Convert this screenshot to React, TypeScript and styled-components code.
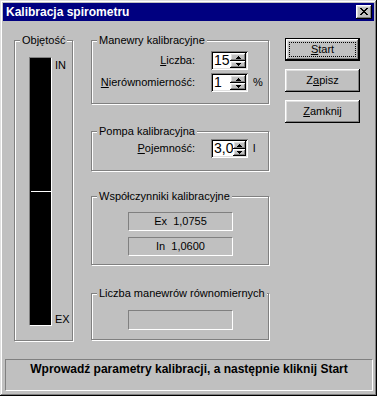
import React from "react";
import styled, { createGlobalStyle } from "styled-components";

const Global = createGlobalStyle`
  html, body { margin: 0; padding: 0; background: #c0c0c0; }
  body {
    font-family: "Liberation Sans", Arial, sans-serif;
    font-size: 11px;
    color: #000;
  }
`;

const raised =
  "box-shadow: inset -1px -1px #000, inset 1px 1px #fff, inset -2px -2px #808080, inset 2px 2px #dfdfdf;";

const Window = styled.div`
  box-sizing: border-box;
  width: 377px;
  height: 396px;
  padding: 3px;
  background: #c0c0c0;
  box-shadow: inset -1px -1px #000, inset 1px 1px #dfdfdf,
    inset -2px -2px #808080, inset 2px 2px #fff;
  display: flex;
  flex-direction: column;
`;

const TitleBar = styled.div`
  height: 18px;
  flex: none;
  background: #000080;
  display: flex;
  align-items: center;
  justify-content: space-between;
  padding: 0 2px 0 3px;
  color: #fff;
  font-weight: bold;
  font-size: 12px;
`;

const CloseButton = styled.div`
  box-sizing: border-box;
  width: 16px;
  height: 14px;
  background: #c0c0c0;
  ${raised}
  display: flex;
  align-items: center;
  justify-content: center;
  padding-bottom: 1px;
`;

const Body = styled.div`
  flex: 1;
  display: flex;
  flex-direction: column;
  padding: 17px 1px 2px 2px;
`;

const Main = styled.div`
  display: flex;
  align-items: flex-start;
  padding-left: 9px;
`;

const Group = styled.div<{ $w: number; $h: number; $pt: number; $mt?: number }>`
  position: relative;
  box-sizing: border-box;
  flex: none;
  width: ${(p) => p.$w}px;
  height: ${(p) => p.$h}px;
  margin-top: ${(p) => p.$mt ?? 0}px;
  padding-top: ${(p) => p.$pt}px;
  border: 1px solid #808080;
  box-shadow: inset 1px 1px #fff, 1px 1px #fff;
`;

const Caption = styled.span`
  position: absolute;
  top: -7px;
  left: 5px;
  padding: 0 2px;
  background: #c0c0c0;
  line-height: 13px;
  white-space: nowrap;
`;

const VolumeGroup = styled(Group)`
  display: flex;
  padding-left: 14px;
  margin-top: 2px;
`;

const Gauge = styled.div`
  box-sizing: border-box;
  width: 23px;
  height: 269px;
  border-style: solid;
  border-width: 1px;
  border-color: #808080 #fff #fff #808080;
  background: #000;
  display: flex;
  flex-direction: column;
`;

const GaugeHalf = styled.div`
  flex: 1;
`;

const GaugeMark = styled.div`
  height: 1px;
  margin-left: 1px;
  background: #fff;
`;

const Scale = styled.div`
  height: 269px;
  box-sizing: border-box;
  margin-left: 3px;
  padding-top: 2px;
  display: flex;
  flex-direction: column;
  justify-content: space-between;
  line-height: 13px;
`;

const Middle = styled.div`
  display: flex;
  flex-direction: column;
  margin-left: 18px;
  margin-top: 2px;
`;

const FormGrid = styled.div`
  display: grid;
  grid-template-columns: 1fr 37px 20px;
  row-gap: 3px;
  align-items: center;
`;

const Label = styled.span`
  text-align: right;
  padding-right: 16px;
  white-space: nowrap;
  line-height: 13px;
`;

const Unit = styled.span`
  padding-left: 5px;
  line-height: 13px;
`;

const SpinBox = styled.div`
  box-sizing: border-box;
  width: 37px;
  height: 19px;
  padding: 2px;
  background: #fff;
  box-shadow: inset 1px 1px #808080, inset -1px -1px #fff, inset 2px 2px #000,
    inset -2px -2px #dfdfdf;
  display: flex;
`;

const SpinValue = styled.span`
  flex: 1;
  font-size: 14px;
  line-height: 14px;
  padding-left: 1px;
`;

const SpinButtons = styled.div`
  width: 16px;
  display: flex;
  flex-direction: column;
`;

const SpinBtn = styled.div<{ $h: number }>`
  box-sizing: border-box;
  height: ${(p) => p.$h}px;
  background: #c0c0c0;
  ${raised}
  display: flex;
  align-items: center;
  justify-content: center;
`;

const ValueBox = styled.div<{ $h: number }>`
  box-sizing: border-box;
  width: 105px;
  height: ${(p) => p.$h}px;
  margin-left: 36px;
  border-style: solid;
  border-width: 1px;
  border-color: #808080 #fff #fff #808080;
  display: flex;
  align-items: center;
  justify-content: center;
  white-space: pre;
  line-height: 13px;
`;

const ValueStack = styled.div`
  display: flex;
  flex-direction: column;
  gap: 6px;
`;

const Buttons = styled.div`
  display: flex;
  flex-direction: column;
  gap: 8px;
  margin-left: 16px;
`;

const Button = styled.div<{ $default?: boolean }>`
  position: relative;
  box-sizing: border-box;
  width: 75px;
  height: 23px;
  background: #c0c0c0;
  ${raised}
  border: ${(p) => (p.$default ? "1px solid #000" : "none")};
  display: flex;
  align-items: center;
  justify-content: center;
  line-height: 13px;
`;

const FocusRect = styled.span`
  position: absolute;
  inset: 3px 3px 3px 3px;
  border: 1px dotted #000;
`;

const Status = styled.div`
  margin-top: auto;
  box-sizing: border-box;
  height: 32px;
  border-style: solid;
  border-width: 1px;
  border-color: #808080 #fff #fff #808080;
  padding-top: 2px;
  text-align: center;
  font-weight: bold;
  font-size: 12px;
  line-height: 14px;
`;

const CloseGlyph = () => (
  <svg width="8" height="7" viewBox="0 0 8 7" shapeRendering="crispEdges">
    <path
      fill="#000"
      d="M0 0h2v1H0zM6 0h2v1H6zM1 1h2v1H1zM5 1h2v1H5zM2 2h4v1H2zM3 3h2v1H3zM2 4h4v1H2zM1 5h2v1H1zM5 5h2v1H5zM0 6h2v1H0zM6 6h2v1H6z"
    />
  </svg>
);

const Arrow = ({ up }: { up?: boolean }) => (
  <svg width="5" height="3" viewBox="0 0 5 3" shapeRendering="crispEdges">
    <path fill="#000" d={up ? "M2 0h1v1H2zM1 1h3v1H1zM0 2h5v1H0z" : "M0 0h5v1H0zM1 1h3v1H1zM2 2h1v1H2z"} />
  </svg>
);

const Spin = ({ value }: { value: string }) => (
  <SpinBox>
    <SpinValue>{value}</SpinValue>
    <SpinButtons>
      <SpinBtn $h={8}>
        <Arrow up />
      </SpinBtn>
      <SpinBtn $h={7}>
        <Arrow />
      </SpinBtn>
    </SpinButtons>
  </SpinBox>
);

export default function App() {
  return (
    <>
      <Global />
      <Window>
        <TitleBar>
          <span>Kalibracja spirometru</span>
          <CloseButton>
            <CloseGlyph />
          </CloseButton>
        </TitleBar>
        <Body>
          <Main>
            <VolumeGroup $w={59} $h={301} $pt={16}>
              <Caption>Objętość</Caption>
              <Gauge>
                <GaugeHalf />
                <GaugeMark />
                <GaugeHalf />
              </Gauge>
              <Scale>
                <span>IN</span>
                <span>EX</span>
              </Scale>
            </VolumeGroup>
            <Middle>
              <Group $w={178} $h={64} $pt={10}>
                <Caption>Manewry kalibracyjne</Caption>
                <FormGrid>
                  <Label>
                    <u>L</u>iczba:
                  </Label>
                  <Spin value="15" />
                  <span />
                  <Label>
                    <u>N</u>ierównomierność:
                  </Label>
                  <Spin value="1" />
                  <Unit>%</Unit>
                </FormGrid>
              </Group>
              <Group $w={178} $h={40} $pt={7} $mt={27}>
                <Caption>Pompa kalibracyjna</Caption>
                <FormGrid>
                  <Label>
                    <u>P</u>ojemność:
                  </Label>
                  <Spin value="3,0" />
                  <Unit>l</Unit>
                </FormGrid>
              </Group>
              <Group $w={178} $h={69} $pt={15} $mt={25}>
                <Caption>Współczynniki kalibracyjne</Caption>
                <ValueStack>
                  <ValueBox $h={19}>{"Ex  1,0755"}</ValueBox>
                  <ValueBox $h={19}>{"In  1,0600"}</ValueBox>
                </ValueStack>
              </Group>
              <Group $w={178} $h={47} $pt={16} $mt={28}>
                <Caption>Liczba manewrów równomiernych</Caption>
                <ValueBox $h={20} />
              </Group>
            </Middle>
            <Buttons>
              <Button $default>
                <FocusRect />
                <span>
                  <u>S</u>tart
                </span>
              </Button>
              <Button>
                <span>
                  Z<u>a</u>pisz
                </span>
              </Button>
              <Button>
                <span>
                  <u>Z</u>amknij
                </span>
              </Button>
            </Buttons>
          </Main>
          <Status>Wprowadź parametry kalibracji, a następnie kliknij Start</Status>
        </Body>
      </Window>
    </>
  );
}
